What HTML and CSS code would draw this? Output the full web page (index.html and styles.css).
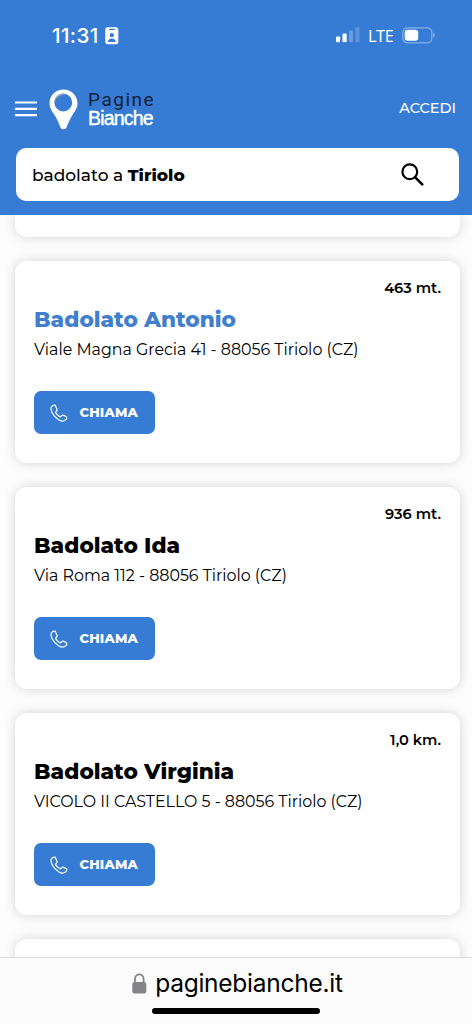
FILE: index.html
```html
<!DOCTYPE html>
<html lang="it">
<head>
<meta charset="utf-8">
<title>Pagine Bianche</title>
<link rel="stylesheet" href="styles.css">
</head>
<body>
<svg class="defs" aria-hidden="true">
  <symbol id="phone" viewBox="0 0 18 18">
    <path d="M4.8 1.2C3.7.8 2.3 1.6 1.5 2.8.6 4.3 1 6.4 2 8.4c1.5 3 4 5.8 7 7.5 1.8 1 3.6 1.5 5 .9 1.3-.5 2.6-1.5 2.8-2.7.1-.8-.2-1.3-.8-1.6l-2.2-1.1c-.8-.4-1.5-.3-2.1.3l-.9.8c-.4.4-.8.4-1.3.1-1.5-.9-2.8-2.2-3.7-3.7-.3-.5-.2-.9.2-1.3l.6-.6c.5-.5.6-1.2.2-1.9L5.6 2c-.2-.4-.4-.7-.8-.8Z"/>
  </symbol>
</svg>
<div class="screen">
  <header class="top">
    <div class="status">
      <div class="clock">
        <span class="time">11:31</span>
        <svg width="14" height="18" viewBox="0 0 14 18"><rect x=".3" y=".3" width="13" height="17" rx="2.5" fill="#fff"/><path d="M4.5 2.3h5" stroke="#377cd4" stroke-width="1.2" stroke-linecap="round"/><circle cx="6.8" cy="8.2" r="2.1" fill="#377cd4"/><path d="M2.8 15c0-4.7 8-4.7 8 0Z" fill="#377cd4"/></svg>
      </div>
      <div class="signals">
        <svg class="bars" width="24" height="16" viewBox="0 0 24 16" fill="#fff"><rect x="0" y="9.5" width="4.2" height="5.7" rx="1.2"/><rect x="6.5" y="6.5" width="4.2" height="8.7" rx="1.2"/><rect x="13" y="3.5" width="4" height="11.7" rx="1.2" opacity=".25"/><rect x="19.4" y="0" width="4" height="15.2" rx="1.2" opacity=".18"/></svg>
        <span class="lte">LTE</span>
        <svg width="34" height="17" viewBox="0 0 34 17"><rect x=".8" y=".8" width="29" height="15" rx="4.5" fill="none" stroke="#fff" stroke-opacity=".4" stroke-width="1.2"/><rect x="2.7" y="2.8" width="13.5" height="11" rx="3" fill="#fff"/><path d="M31.2 5.7q3.2 2.6 0 5.2Z" fill="#fff" opacity=".45"/></svg>
      </div>
    </div>
    <div class="brandbar">
      <svg class="menu" width="22" height="16" viewBox="0 0 22 16"><path d="M0 1.5h22M0 7.8h22M0 14.1h22" stroke="#fff" stroke-width="2.2"/></svg>
      <svg class="pin" width="30" height="41" viewBox="0 0 30 41"><path fill="#fff" fill-rule="evenodd" d="M14.5.5C6.8.5.5 6.5.5 14.2c0 5.3 3.1 8.6 5.4 12.4 2.4 4 3.8 7.5 5.4 11.4 1.2 3 5.2 3 6.4 0 1.6-3.9 3-7.4 5.4-11.4 2.3-3.8 5.4-7.1 5.4-12.4C28.5 6.5 22.2.5 14.5.5Zm-.2 4.1a8.9 8.9 0 1 1 0 17.8 8.9 8.9 0 0 1 0-17.8Z"/><path d="M5.4 14.5C4.3 7.5 11.5 1.8 18 5.6c-5.6-1.2-11.8 2.5-12.6 8.9Z" fill="#9baac0"/></svg>
      <div class="brand"><span class="pagine">Pagine</span><span class="bianche">Bianche</span></div>
      <span class="login">ACCEDI</span>
    </div>
    <div class="search">
      <span class="query">badolato a <b>Tiriolo</b></span>
      <svg width="23" height="24" viewBox="0 0 23 24" fill="none" stroke="#000"><circle cx="8.8" cy="8.8" r="7.4" stroke-width="2.2"/><path d="m14.2 14.4 7 7" stroke-width="2.6" stroke-linecap="round"/></svg>
    </div>
  </header>
  <main class="results">
    <article class="card stub"></article>
    <article class="card">
      <span class="distance">463 mt.</span>
      <h2 class="name featured">Badolato Antonio</h2>
      <p class="address">Viale Magna Grecia 41 - 88056 Tiriolo (CZ)</p>
      <div class="call"><svg width="18" height="18"><use href="#phone"/></svg><span>CHIAMA</span></div>
    </article>
    <article class="card">
      <span class="distance">936 mt.</span>
      <h2 class="name">Badolato Ida</h2>
      <p class="address">Via Roma 112 - 88056 Tiriolo (CZ)</p>
      <div class="call"><svg width="18" height="18"><use href="#phone"/></svg><span>CHIAMA</span></div>
    </article>
    <article class="card">
      <span class="distance">1,0 km.</span>
      <h2 class="name">Badolato Virginia</h2>
      <p class="address">VICOLO II CASTELLO 5 - 88056 Tiriolo (CZ)</p>
      <div class="call"><svg width="18" height="18"><use href="#phone"/></svg><span>CHIAMA</span></div>
    </article>
    <article class="card"></article>
  </main>
  <footer class="browser">
    <div class="url">
      <svg width="15" height="21" viewBox="0 0 15 21"><rect x=".3" y="9" width="14" height="11.5" rx="2" fill="#858587"/><path d="M3 10V6.2C3 -.2 11.6 -.2 11.6 6.2V10" fill="none" stroke="#858587" stroke-width="1.8"/></svg>
      <span>paginebianche.it</span>
    </div>
    <div class="home"></div>
  </footer>
</div>
</body>
</html>
```
FILE: styles.css
```css
* { box-sizing: border-box; margin: 0; }
body { background: #fdfdfd; color: #000; font-family: Montserrat, Inter, sans-serif; }
.defs { position: absolute; width: 0; height: 0; }
.screen { display: flex; flex-direction: column; width: 472px; height: 1024px; overflow: hidden; }
svg { display: block; flex: none; }
span, p { white-space: nowrap; }

.top { flex: none; height: 215px; background: #377cd4; color: #fff; z-index: 1; }
.status { display: flex; justify-content: space-between; height: 72px; padding: 26px 36px 0 52px; }
.clock, .signals { display: flex; align-items: center; height: 19px; }
.clock { gap: 6px; }
.time { font-family: Inter, sans-serif; font-size: 20.5px; font-weight: 500; letter-spacing: 0.4px; width: 47px; }
.bars { margin: -1px 8px 0 0; }
.lte { font-family: "Open Sans", sans-serif; font-size: 16.5px; font-weight: 500; letter-spacing: -0.5px; width: 25px; margin-right: 9px; }

.brandbar { display: flex; align-items: center; height: 76px; padding: 0 16px 0 15px; }
.menu { margin-top: -2px; }
.pin { margin: -2px 0 0 12px; }
.brand { display: flex; flex-direction: column; margin: -2px 0 0 9px; }
.pagine { color: #10213b; font-family: Roboto, sans-serif; font-size: 19px; line-height: 18px; letter-spacing: 1.5px; }
.bianche { font-family: "Liberation Sans", sans-serif; font-size: 19.5px; line-height: 18px; letter-spacing: -0.8px; -webkit-text-stroke: 0.4px #fff; }
.login { margin-left: auto; font-size: 14.5px; font-weight: 500; margin-top: -4px; }

.search { display: flex; align-items: center; justify-content: space-between; width: 443px; height: 53px; margin-left: 16px; padding: 0 35px 0 16px; border-radius: 10px; background: #fff; color: #000; }
.query { font-size: 17px; font-weight: 500; }
.query b { font-weight: 800; }

.results { flex: 1; min-height: 0; display: flex; flex-direction: column; gap: 24px; padding: 0 12px 0 15px; overflow: hidden; }
.card { flex: none; display: flex; flex-direction: column; align-items: flex-start; height: 202px; padding: 17px 19px 16px; border-radius: 12px; background: #fff; box-shadow: 0 0 12px rgba(0, 0, 0, 0.17); }
.stub { height: 22px; padding: 0; border-radius: 0 0 12px 12px; }
.distance { align-self: flex-end; font-size: 14.6px; font-weight: 600; line-height: 20px; }
.name { margin-top: 6px; font-size: 21.6px; font-weight: 800; line-height: 30px; }
.featured { color: #417fce; }
.address { margin-top: 6px; font-size: 15.86px; line-height: 20px; }
.call { display: flex; align-items: center; gap: 11.5px; width: 121px; height: 43px; margin-top: 31px; padding-left: 16px; border-radius: 7px; background: #377cd4; color: #fff; font-size: 13px; font-weight: 800; letter-spacing: 0.2px; }
.call span { margin-top: -1px; }
.call svg { fill: none; stroke: #fff; stroke-width: 1.2; }

.browser { flex: none; height: 67px; display: flex; flex-direction: column; align-items: center; border-top: 1px solid #dcdcdc; background: #fbfbfb; z-index: 1; }
.url { display: flex; align-items: center; gap: 8px; height: 50px; font-family: Inter, sans-serif; font-size: 24.5px; letter-spacing: -0.25px; padding-left: 3px; }
.home { width: 168px; height: 6px; border-radius: 3px; background: #000; }
```
